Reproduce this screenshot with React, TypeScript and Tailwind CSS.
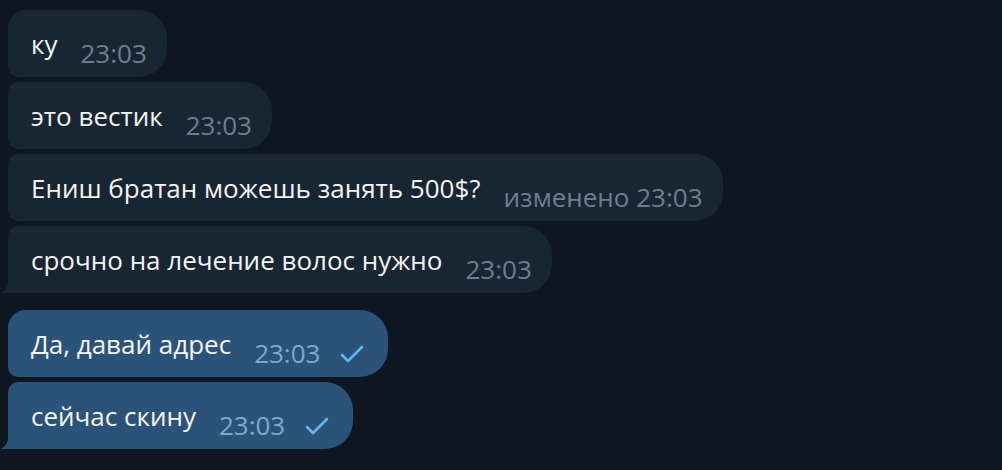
import type { ReactNode } from "react";

type Message = {
  text: string;
  time: string;
  edited?: boolean;
  out?: boolean;
  first?: boolean;
  last?: boolean;
};

const groups: Message[][] = [
  [
    { text: "ку", time: "23:03", first: true },
    { text: "это вестик", time: "23:03" },
    { text: "Ениш братан можешь занять 500$?", time: "23:03", edited: true },
    { text: "срочно на лечение волос нужно", time: "23:03", last: true },
  ],
  [
    { text: "Да, давай адрес", time: "23:03", out: true, first: true },
    { text: "сейчас скину", time: "23:03", out: true, last: true },
  ],
];

export default function App() {
  return (
    <div
      className="flex h-[470px] w-[1002px] flex-col gap-[17px] overflow-hidden bg-[#0e1621] pl-2 pt-[10px]"
      style={{ fontFamily: '"Open Sans", "Noto Sans", sans-serif' }}
    >
      {groups.map((group, i) => (
        <div key={i} className="flex flex-col items-start gap-[5px]">
          {group.map((message, j) => (
            <Bubble key={j} message={message} />
          ))}
        </div>
      ))}
    </div>
  );
}

function Bubble({ message }: { message: Message }) {
  const { text, time, edited, out, first, last } = message;
  const corners = first
    ? "rounded-tl-[18px] rounded-bl-[10px]"
    : last
      ? "rounded-tl-[10px] rounded-bl-none"
      : "rounded-tl-[10px] rounded-bl-[10px]";

  return (
    <div
      className={`relative flex h-[67px] items-end rounded-r-[28px] pb-[10px] pl-[23px] pt-[18px] ${corners} ${
        out ? "bg-[#2b5278] pr-[24px]" : "bg-[#182533] pr-[20px]"
      }`}
    >
      {last ? <Tail color={out ? "#2b5278" : "#182533"} /> : null}
      <span className="pb-[7px] text-[26px] leading-[32px] whitespace-nowrap text-[#f5f5f5]">
        {text}
      </span>
      <span
        className={`ml-[23px] flex items-end gap-[20px] text-[26px] leading-[28px] whitespace-nowrap ${
          out ? "text-[#7da8d3]" : "text-[#6d7f8f]"
        }`}
      >
        <span>{edited ? `изменено ${time}` : time}</span>
        {out ? <Check /> : null}
      </span>
    </div>
  );
}

function Tail({ color }: { color: string }): ReactNode {
  return (
    <svg
      className="absolute bottom-0 left-[-8px]"
      width="9"
      height="20"
      viewBox="0 0 9 20"
    >
      <path d="M9 0 V20 H0 C5 18 8 14 8 8 V0 Z" fill={color} />
    </svg>
  );
}

function Check() {
  return (
    <svg width="24" height="18" viewBox="0 0 24 18" className="mb-[4px]">
      <path
        d="M2 10 L8 16 L22 2"
        fill="none"
        stroke="#64b5ef"
        strokeWidth="2.6"
        strokeLinecap="round"
        strokeLinejoin="round"
      />
    </svg>
  );
}
